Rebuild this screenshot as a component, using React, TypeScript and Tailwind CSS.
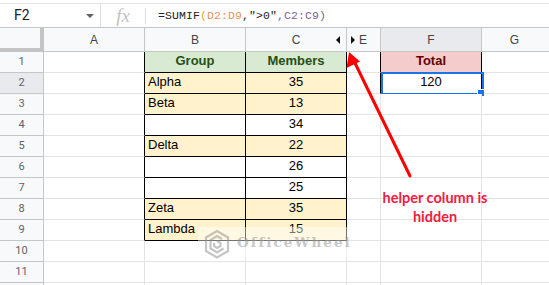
import React from 'react';

type Row = {
  n: number;
  b?: string;
  c?: string;
  f?: string;
  kind?: 'head' | 'yellow' | 'white';
};

const rows: Row[] = [
  { n: 1, b: 'Group', c: 'Members', f: 'Total', kind: 'head' },
  { n: 2, b: 'Alpha', c: '35', f: '120', kind: 'yellow' },
  { n: 3, b: 'Beta', c: '13', kind: 'yellow' },
  { n: 4, b: '', c: '34', kind: 'white' },
  { n: 5, b: 'Delta', c: '22', kind: 'yellow' },
  { n: 6, b: '', c: '26', kind: 'white' },
  { n: 7, b: '', c: '25', kind: 'white' },
  { n: 8, b: 'Zeta', c: '35', kind: 'yellow' },
  { n: 9, b: 'Lambda', c: '15', kind: 'yellow' },
  { n: 10 },
  { n: 11 },
  { n: 12 },
];

const FormulaBar = () => (
  <div className="pt-[3px]">
    <div className="h-[25px] flex items-center border-t border-b border-t-[#e3e3e3] border-b-[#c4c7c5]">
      <div className="w-[101px] h-full flex items-center border-r border-[#dadce0] pl-[14px] pr-[6px]">
        <span className="text-[14px] text-[#202124] font-['Roboto',sans-serif] flex-1">F2</span>
        <span className="w-0 h-0 border-l-[4px] border-r-[4px] border-t-[4px] border-l-transparent border-r-transparent border-t-[#5f6368]" />
      </div>
      <div className="w-[44px] h-full flex items-center justify-center">
        <span className="text-[19px] italic text-[#c2c2c2] font-['Liberation_Serif',serif] leading-none">fx</span>
      </div>
      <div className="w-px h-[16px] bg-[#dadce0]" />
      <div className="pl-[12px] text-[11.5px] font-['Liberation_Mono',monospace] text-[#222] tracking-[0.1px]">
        <span>=SUMIF</span>
        <span className="text-[#e0a23a]">(</span>
        <span className="text-[#e8915b]">D2:D9</span>
        <span>,"&gt;0"</span>
        <span className="text-[#7b61a8]">,C2:C9)</span>
      </div>
    </div>
  </div>
);

const ColHeader = () => (
  <div className="flex h-[24px] bg-[#f8f9fa] font-['Liberation_Sans',sans-serif] text-[12px] text-[#444]">
    <div className="w-[44px] shrink-0 h-full border-r-[4px] border-b-[4px] border-[#c4c4c4] bg-[#f8f9fa]" />
    <div className="w-[101px] shrink-0 h-full border-r border-b border-[#c4c7c5] flex items-center justify-center">A</div>
    <div className="w-[101px] shrink-0 h-full border-r border-b border-[#c4c7c5] flex items-center justify-center">B</div>
    <div className="w-[101px] shrink-0 h-full border-r border-b border-[#c4c7c5] flex items-center justify-center relative">
      C
      <span className="absolute right-[6px] top-[8px] w-0 h-0 border-t-[4px] border-b-[4px] border-r-[4px] border-t-transparent border-b-transparent border-r-[#111]" />
    </div>
    <div className="w-[34px] shrink-0 h-full border-r border-b border-[#c4c7c5] flex items-center pl-[4px] gap-[4px]">
      <span className="w-0 h-0 border-t-[4px] border-b-[4px] border-l-[4px] border-t-transparent border-b-transparent border-l-[#111]" />
      <span>E</span>
    </div>
    <div className="w-[101px] shrink-0 h-full border-r border-b border-[#c4c7c5] bg-[#e8eaed] flex items-center justify-center">F</div>
    <div className="flex-1 h-full border-b border-[#c4c7c5] flex items-center justify-center pr-[2px]">G</div>
  </div>
);

const GridRow = ({ r }: { r: Row }) => {
  const inTable = !!r.kind;
  const fill =
    r.kind === 'head' ? 'bg-[#d9ead3]' : r.kind === 'yellow' ? 'bg-[#fff2cc]' : 'bg-white';
  const headText = 'font-bold text-[#274e13]';
  const tb = inTable ? 'border-black' : 'border-[#e2e3e3]';
  const fRow = r.n <= 2;
  return (
    <div className="flex h-[21px] font-['Liberation_Sans',sans-serif] text-[13px] text-black">
      <div
        className={`w-[44px] shrink-0 h-full border-r border-b border-[#c4c7c5] flex items-center justify-center text-[11px] text-[#5f6368] font-['Roboto',sans-serif] ${
          r.n === 2 ? 'bg-[#e8eaed]' : 'bg-[#f8f9fa]'
        }`}
      >
        {r.n < 12 ? r.n : ''}
      </div>
      <div className={`w-[101px] shrink-0 h-full border-b border-b-[#e2e3e3] border-r ${inTable ? 'border-r-black' : 'border-r-[#e2e3e3]'}`} />
      <div
        className={`w-[101px] shrink-0 h-full border-r border-b ${tb} ${inTable ? fill : ''} flex items-end pb-[2px] ${
          r.kind === 'head' ? `justify-center ${headText}` : 'pl-[3px]'
        }`}
      >
        {r.b}
      </div>
      <div
        className={`w-[101px] shrink-0 h-full border-r border-b ${tb} ${inTable ? fill : ''} flex items-end pb-[2px] justify-center ${
          r.kind === 'head' ? headText : ''
        }`}
      >
        {r.c}
      </div>
      <div className={`w-[34px] shrink-0 h-full border-b border-b-[#e2e3e3] border-r ${fRow ? 'border-r-black' : 'border-r-[#e2e3e3]'}`} />
      <div
        className={`w-[101px] shrink-0 h-full border-r border-b relative ${
          fRow ? 'border-black' : 'border-[#e2e3e3]'
        } ${r.n === 1 ? 'bg-[#f4cccc] font-bold text-[#660000]' : 'bg-white'} flex items-end pb-[2px] justify-center`}
      >
        {r.f}
        {r.n === 2 && (
          <>
            <div className="absolute left-0 top-[-1px] right-[-3px] bottom-[-2px] border-2 border-[#1a73e8]" />
            <div className="absolute right-[-4px] bottom-[-4px] w-[6px] h-[6px] bg-[#1a73e8] border border-white box-content" />
          </>
        )}
      </div>
      <div className="flex-1 h-full border-b border-[#e2e3e3]" />
    </div>
  );
};

const Watermark = () => (
  <div className="absolute left-[198px] top-[227px] w-[149px] h-[31px] bg-white/45 pointer-events-none">
    <div className="absolute left-[6px] top-[2px] opacity-50">
      <svg width="26" height="34" viewBox="0 0 26 34" fill="none" stroke="#8d8d8d" strokeWidth="2.2">
        <path d="M13 2 L24 8.5 L24 22 L13 28.5 L2 22 L2 8.5 Z" />
        <path d="M18 10 L13 7 L6.5 11 L6.5 19.5 L13 23.5 L19.5 19.5" />
        <path d="M13 12 L16.5 14 L16.5 17 L13 19 L10 17 L10 14" />
      </svg>
    </div>
    <div className="absolute left-[39px] top-[9px] text-[13.5px] font-bold tracking-[2px] text-[#9a9a9a] opacity-55 font-['DejaVu_Serif',serif] leading-none">
      OfficeWheel
    </div>
  </div>
);

const Annotation = () => (
  <>
    <svg className="absolute left-0 top-0 pointer-events-none" width="549" height="285" viewBox="0 0 549 285">
      <line x1="410" y1="176" x2="354" y2="61" stroke="#ff0000" strokeWidth="3" strokeLinecap="round" />
      <path d="M349 52 L346.5 68 L360 61.5 Z" fill="#ff0000" />
    </svg>
    <div className="absolute left-[370px] top-[188px] w-[130px] text-center text-[14.5px] leading-[19px] font-bold text-[#f0203f] font-['Lato',sans-serif]">
      helper column is
      <br />
      hidden
    </div>
  </>
);

export default function App() {
  return (
    <div className="relative w-[549px] h-[285px] overflow-hidden bg-white">
      <FormulaBar />
      <ColHeader />
      {rows.map((r) => (
        <GridRow key={r.n} r={r} />
      ))}
      <Watermark />
      <Annotation />
    </div>
  );
}
